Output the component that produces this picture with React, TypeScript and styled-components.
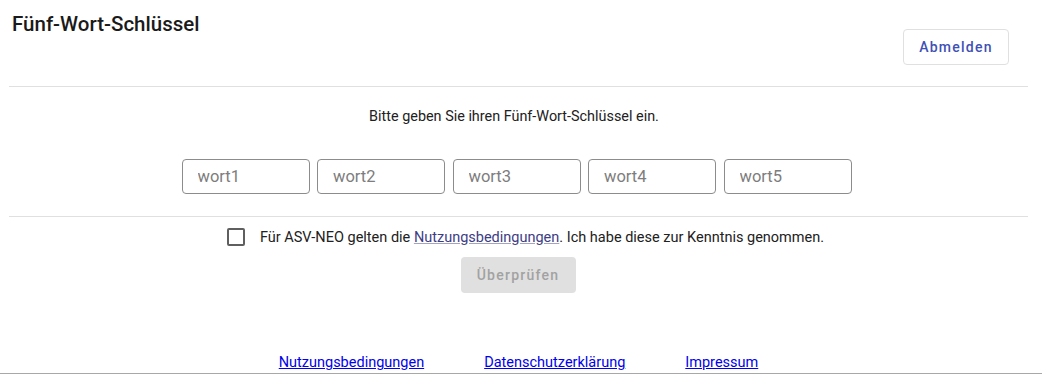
import React from "react";
import styled, { createGlobalStyle } from "styled-components";

const GlobalStyle = createGlobalStyle`
  body {
    margin: 0;
    background: #ffffff;
    font-family: Roboto, "Liberation Sans", sans-serif;
    color: rgba(0, 0, 0, 0.87);
  }
`;

const Page = styled.div`
  width: 1042px;
  height: 374px;
  display: flex;
  flex-direction: column;
  box-sizing: border-box;
  border-bottom: 1px solid #a8a8a8;
`;

const Header = styled.header`
  display: flex;
  justify-content: space-between;
  height: 86px;
  margin: 0 14px 0 9px;
  border-bottom: 1px solid #e0e0e0;
`;

const Title = styled.h1`
  margin: 12px 0 0 3px;
  font-size: 20.5px;
  line-height: 24px;
  font-weight: 500;
  color: #1a1a1a;
`;

const OutlineButton = styled.button`
  align-self: flex-end;
  margin: 0 19px 21px 0;
  width: 106px;
  height: 36px;
  border: 1px solid #e0e0e0;
  border-radius: 4px;
  background: #fff;
  color: #3f51b5;
  font-family: Roboto, "Liberation Sans", sans-serif;
  font-size: 14px;
  font-weight: 500;
  letter-spacing: 1.25px;
`;

const Section = styled.section`
  display: flex;
  flex-direction: column;
  align-items: center;
  margin: 0 14px 0 9px;
  padding: 21px 0 22px;
  border-bottom: 1px solid #e0e0e0;
`;

const Hint = styled.p`
  margin: 0 9px 34px 0;
  font-size: 14.4px;
  line-height: 17px;
  color: #212121;
`;

const Words = styled.div`
  display: flex;
  gap: 7.5px;
  margin-right: 4px;
`;

const WordInput = styled.input`
  width: 128px;
  height: 35px;
  box-sizing: border-box;
  border: 1px solid #8c8c8c;
  border-radius: 4px;
  padding: 0 0 0 15px;
  font-family: Roboto, "Liberation Sans", sans-serif;
  font-size: 16.5px;
  color: #333;
  outline: none;

  &::placeholder {
    color: #7d7d7d;
  }
`;

const Terms = styled.div`
  display: flex;
  flex-direction: column;
  align-items: center;
  padding-top: 11px;
`;

const CheckRow = styled.label`
  display: flex;
  align-items: center;
  gap: 15px;
  margin-left: 9px;
  font-size: 14.5px;
  color: #212121;
`;

const Box = styled.span`
  width: 14px;
  height: 14px;
  border: 2px solid #5f5f5f;
  border-radius: 2px;
`;

const InlineLink = styled.a`
  color: #3d3d85;
  text-decoration: underline;
  text-decoration-color: #a3a3c8;
`;

const FilledButton = styled.button`
  margin: 11px 6px 0 0;
  width: 115px;
  height: 36px;
  border: none;
  border-radius: 4px;
  background: #e0e0e0;
  color: #a2a2a2;
  font-family: Roboto, "Liberation Sans", sans-serif;
  font-size: 14px;
  font-weight: 500;
  letter-spacing: 1.25px;
`;

const Footer = styled.footer`
  margin-top: auto;
  display: flex;
  justify-content: center;
  gap: 60px;
  padding: 0 5px 2px 0;
  font-size: 14.5px;
  line-height: 17px;

  a {
    color: #0000ee;
  }
`;

const words = ["wort1", "wort2", "wort3", "wort4", "wort5"];

export default function App() {
  return (
    <>
      <GlobalStyle />
      <Page>
        <Header>
          <Title>Fünf-Wort-Schlüssel</Title>
          <OutlineButton>Abmelden</OutlineButton>
        </Header>
        <Section>
          <Hint>Bitte geben Sie ihren Fünf-Wort-Schlüssel ein.</Hint>
          <Words>
            {words.map((w) => (
              <WordInput key={w} placeholder={w} />
            ))}
          </Words>
        </Section>
        <Terms>
          <CheckRow>
            <Box />
            <span>
              Für ASV-NEO gelten die <InlineLink href="#">Nutzungsbedingungen</InlineLink>. Ich habe diese zur Kenntnis
              genommen.
            </span>
          </CheckRow>
          <FilledButton disabled>Überprüfen</FilledButton>
        </Terms>
        <Footer>
          <a href="#">Nutzungsbedingungen</a>
          <a href="#">Datenschutzerklärung</a>
          <a href="#">Impressum</a>
        </Footer>
      </Page>
    </>
  );
}
